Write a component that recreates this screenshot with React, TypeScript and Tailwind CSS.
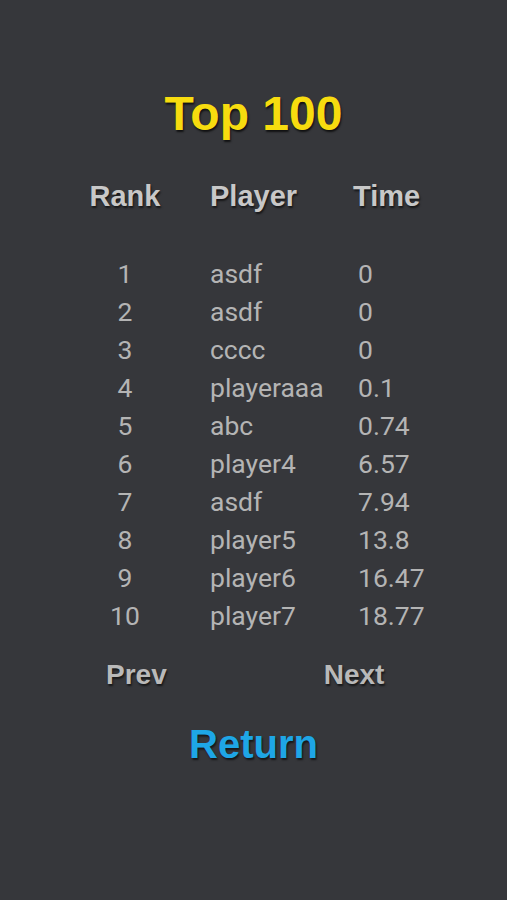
const scores = [
  { rank: 1, name: "asdf", time: "0" },
  { rank: 2, name: "asdf", time: "0" },
  { rank: 3, name: "cccc", time: "0" },
  { rank: 4, name: "playeraaa", time: "0.1" },
  { rank: 5, name: "abc", time: "0.74" },
  { rank: 6, name: "player4", time: "6.57" },
  { rank: 7, name: "asdf", time: "7.94" },
  { rank: 8, name: "player5", time: "13.8" },
  { rank: 9, name: "player6", time: "16.47" },
  { rank: 10, name: "player7", time: "18.77" },
];

const App = () => {
  return (
    <div className="w-[507px] h-[900px] bg-[#36373b] font-['Liberation_Sans',Arial,sans-serif] overflow-hidden">
      <h1 className="pt-[90px] text-center text-[48px] leading-[48px] font-bold text-[#f7dc0f] [text-shadow:1px_2px_2px_rgba(0,0,0,0.7)]">
        Top 100
      </h1>

      <div className="mt-[44px] flex pl-[85px] text-[29px] leading-[29px] font-bold text-[#c8c8c8] [text-shadow:1px_2px_2px_rgba(0,0,0,0.6)]">
        <p className="w-[80px] text-center">Rank</p>
        <p className="ml-[45px] w-[143px]">Player</p>
        <p>Time</p>
      </div>

      <div className="mt-[44px] flex flex-col font-['Roboto',sans-serif] text-[26.5px] leading-[38px] text-[#b4b4b4]">
        {scores.map((s) => (
          <div key={s.rank} className="flex pl-[85px]">
            <p className="w-[80px] text-center">{s.rank}</p>
            <p className="ml-[45px] w-[148px]">{s.name}</p>
            <p>{s.time}</p>
          </div>
        ))}
      </div>

      <div className="mt-[26px] flex text-[28px] leading-[28px] font-bold text-[#b9b9b9] [text-shadow:1px_2px_2px_rgba(0,0,0,0.6)]">
        <p className="ml-[106px]">Prev</p>
        <p className="ml-[157px]">Next</p>
      </div>

      <p className="mt-[36px] text-center text-[40px] leading-[38px] font-bold text-[#1ea6e6] [text-shadow:1px_2px_2px_rgba(0,0,0,0.6)]">
        Return
      </p>
    </div>
  );
};

export default App;
